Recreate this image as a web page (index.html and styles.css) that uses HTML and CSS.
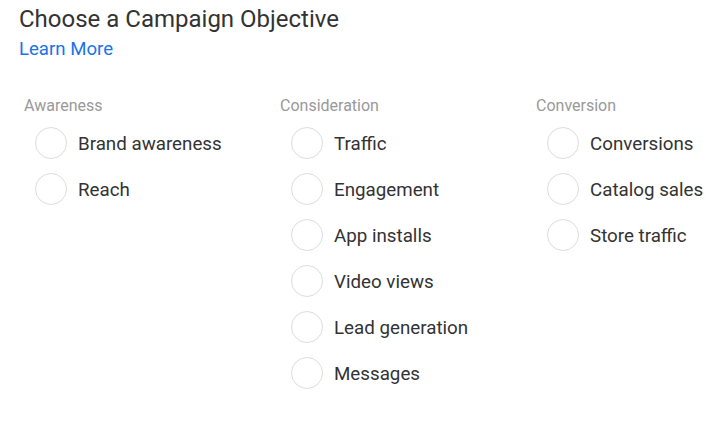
FILE: index.html
```html
<!DOCTYPE html>
<html lang="en">
<head>
    <meta charset="UTF-8">
    <title>Campaign Objective</title>
    <link rel="stylesheet" href="styles.css">
</head>
<body>
    <div class="page">
        <h1 class="title">Choose a Campaign Objective</h1>
        <a class="learn-more" href="#">Learn More</a>

        <div class="columns">
            <div class="group">
                <div class="group-title">Awareness</div>
                <label class="option"><span class="radio"></span><span class="option-text">Brand awareness</span></label>
                <label class="option"><span class="radio"></span><span class="option-text">Reach</span></label>
            </div>
            <div class="group">
                <div class="group-title">Consideration</div>
                <label class="option"><span class="radio"></span><span class="option-text">Traffic</span></label>
                <label class="option"><span class="radio"></span><span class="option-text">Engagement</span></label>
                <label class="option"><span class="radio"></span><span class="option-text">App installs</span></label>
                <label class="option"><span class="radio"></span><span class="option-text">Video views</span></label>
                <label class="option"><span class="radio"></span><span class="option-text">Lead generation</span></label>
                <label class="option"><span class="radio"></span><span class="option-text">Messages</span></label>
            </div>
            <div class="group">
                <div class="group-title">Conversion</div>
                <label class="option"><span class="radio"></span><span class="option-text">Conversions</span></label>
                <label class="option"><span class="radio"></span><span class="option-text">Catalog sales</span></label>
                <label class="option"><span class="radio"></span><span class="option-text">Store traffic</span></label>
            </div>
        </div>
    </div>
</body>
</html>
```

FILE: styles.css
```css
* {
    margin: 0;
    padding: 0;
    box-sizing: border-box;
}

body {
    font-family: Roboto, 'Liberation Sans', sans-serif;
    background-color: #ffffff;
    color: #333333;
}

.page {
    padding: 4px 0 0 19px;
}

.title {
    font-size: 24px;
    font-weight: 400;
    line-height: 30px;
    color: #333333;
}

.learn-more {
    display: inline-block;
    margin-top: 3px;
    font-size: 18.6px;
    line-height: 24px;
    color: #1a73e8;
    text-decoration: none;
}

.columns {
    display: grid;
    grid-template-columns: 256px 256px 196px;
    margin-top: 35px;
    padding-left: 5px;
}

.group-title {
    font-size: 16px;
    line-height: 20px;
    color: #999999;
    margin-bottom: 11px;
}

.option {
    display: flex;
    align-items: center;
    gap: 11px;
    height: 32px;
    margin-bottom: 14px;
    padding-left: 11px;
    font-size: 18.75px;
    color: #333333;
}

.option-text {
    padding-top: 2px;
}

.radio {
    width: 32px;
    height: 32px;
    border: 1px solid #dddddd;
    border-radius: 50%;
    flex-shrink: 0;
}
```
